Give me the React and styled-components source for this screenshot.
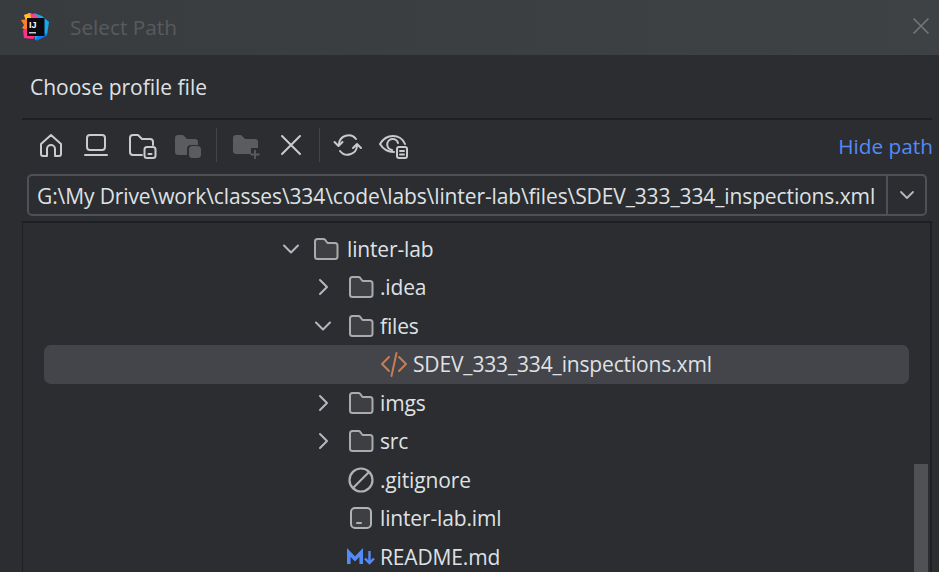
import React from 'react'
import styled, { createGlobalStyle } from 'styled-components'

const GlobalStyle = createGlobalStyle`
    html, body {
        margin: 0;
        padding: 0;
        background: #2b2d30;
    }
    * {
        box-sizing: border-box;
    }
`

const Dialog = styled.div`
    width: 939px;
    height: 572px;
    overflow: hidden;
    display: flex;
    flex-direction: column;
    background: #2b2d30;
    color: #dfe1e5;
    font-family: "Open Sans", "Noto Sans", sans-serif;
`

const TitleBar = styled.div`
    height: 55px;
    flex-shrink: 0;
    display: flex;
    align-items: center;
    padding: 0 9px 0 21px;
    background: linear-gradient(90deg, #393c3f, #3e4245);
`

const TitleText = styled.div`
    margin: 0 0 2px 19px;
    flex: 1;
    font-size: 20.8px;
    color: #585b5e;
`

const CloseButton = styled.div`
    width: 18px;
    height: 18px;
    margin-bottom: 3px;
    display: flex;
    color: #74777a;
`

const Content = styled.div`
    flex: 1;
    min-height: 0;
    display: flex;
    flex-direction: column;
    padding: 0 7px 0 22px;
`

const Heading = styled.div`
    height: 65px;
    flex-shrink: 0;
    padding: 0 8px;
    display: flex;
    align-items: center;
    font-size: 21px;
    border-bottom: 2px solid #1e1f22;
`

const Toolbar = styled.div`
    height: 54px;
    flex-shrink: 0;
    display: flex;
    align-items: center;
    padding-left: 15px;
`

const ToolIcon = styled.div`
    width: ${p => p.$w || 28}px;
    height: 28px;
    margin: 0 ${p => p.$gap ?? 17}px 5px 0;
    display: flex;
    color: ${p => (p.$off ? '#5a5c5f' : '#c9cbcf')};
`

const Separator = styled.div`
    width: 1px;
    height: 34px;
    margin: 0 ${p => p.$after}px 5px -2px;
    background: #43454a;
`

const HidePath = styled.div`
    margin: 0 -1px 2px auto;
    font-size: 20.8px;
    color: #548af7;
`

const PathCombo = styled.div`
    height: 42px;
    flex-shrink: 0;
    margin: 0 5px;
    display: flex;
    border: 2px solid #4e5157;
    border-radius: 5px;
`

const PathText = styled.div`
    flex: 1;
    padding: 1px 0 0 8px;
    display: flex;
    align-items: center;
    font-size: 21px;
    letter-spacing: -0.11px;
    white-space: nowrap;
    overflow: hidden;
`

const ComboArrow = styled.div`
    width: 39px;
    display: flex;
    align-items: center;
    justify-content: center;
    border-left: 2px solid #4e5157;
    color: #b4b8bf;
`

const Tree = styled.div`
    position: relative;
    flex: 1;
    min-height: 0;
    margin-top: 5px;
    padding: 6.5px 21px 0 21px;
    border-top: 2px solid #1e1f22;
    border-left: 1px solid #1e1f22;
    border-right: 2px solid #1e1f22;
    overflow: hidden;
`

const Row = styled.div`
    height: 38.5px;
    display: flex;
    align-items: center;
    padding-left: ${p => 235 + p.$level * 33}px;
    font-size: 21px;
    letter-spacing: -0.15px;
    border-radius: 7px;
    background: ${p => (p.$selected ? '#43454a' : 'transparent')};
`

const Chevron = styled.div`
    width: 24px;
    height: 24px;
    flex-shrink: 0;
    margin-left: ${p => (p.$level === 1 ? -1 : 0)}px;
    display: flex;
    color: #b4b8bf;
`

const iconLeft = { 0: 9, 1: 12, 2: 11 }
const iconRight = { 0: 7, 1: 5, 2: 5 }

const FileIcon = styled.div`
    width: 28px;
    height: 28px;
    flex-shrink: 0;
    margin: 0 ${p => iconRight[p.$level]}px 0 ${p => iconLeft[p.$level]}px;
    display: flex;
`

const ScrollThumb = styled.div`
    position: absolute;
    right: 2px;
    top: 241px;
    bottom: 0;
    width: 14px;
    background: #4f5155;
`

const Svg = ({ w = 28, h = 28, children }) => (
    <svg width={w} height={h} viewBox={`0 0 ${w} ${h}`} fill="none" stroke="currentColor" strokeWidth="2" strokeLinecap="round" strokeLinejoin="round">
        {children}
    </svg>
)

const Logo = () => (
    <svg width="30" height="30" viewBox="0 0 30 30">
        <path d="M13 0 L21 3 L28 9 L26 22 L14 27 L12 10 Z" fill="#1aa7ec" />
        <path d="M16 24 L26 20 L25 23 L15 28 Z" fill="#087cfa" />
        <path d="M3 2 L9 0 L16 2 L20 8 L6 10 Z" fill="#ff3d8b" />
        <path d="M3 2 L9 0 L10 5 L5 8 Z" fill="#ffc21f" />
        <path d="M0 7 L7 6 L8 19 L1 15 L3 12 Z" fill="#fe7d2d" />
        <path d="M2 17 L8 15 L14 23 L12 26 L3 25 Z" fill="#ff2f8e" />
        <rect x="6" y="5" width="17.5" height="18" fill="#0b0a0e" />
        <text x="8" y="14.5" fontSize="9" fontWeight="700" fill="#fff" fontFamily="Liberation Sans, sans-serif">IJ</text>
        <rect x="8" y="19" width="7" height="1.5" fill="#c9c9c9" />
    </svg>
)

const CloseIcon = () => (
    <svg width="18" height="18" viewBox="0 0 18 18" fill="none" stroke="currentColor" strokeWidth="1.6">
        <path d="M1.5 1.5 L16.5 16.5 M16.5 1.5 L1.5 16.5" />
    </svg>
)

const FolderPath = 'M3 6.5 a2.5 2.5 0 0 1 2.5 -2.5 h6 a2 2 0 0 1 1.5 .7 l2.5 3.3 h7.5 a2.5 2.5 0 0 1 2.5 2.5 v11 a2.5 2.5 0 0 1 -2.5 2.5 H5.5 a2.5 2.5 0 0 1 -2.5 -2.5 Z'

const HomeIcon = () => (
    <Svg>
        <path d="M4 13 L14 4 L24 13 V23 a2 2 0 0 1 -2 2 H18 V18 a4 4 0 0 0 -8 0 V25 H6 a2 2 0 0 1 -2 -2 Z" />
    </Svg>
)

const LaptopIcon = () => (
    <Svg>
        <rect x="5" y="4" width="18" height="15" rx="3" />
        <path d="M3 24 H25" />
    </Svg>
)

const ProjectIcon = () => (
    <svg width="30" height="28" viewBox="0 0 30 28" fill="none" stroke="currentColor" strokeWidth="2" strokeLinecap="round" strokeLinejoin="round">
        <path d="M14 24 H5 a3 3 0 0 1 -3 -3 V7 a3 3 0 0 1 3 -3 h5 l4 4 h8 a3 3 0 0 1 3 3 v3" />
        <rect x="16.5" y="16" width="11" height="11" rx="2.5" />
        <path d="M20.5 23 H23.5" />
    </svg>
)

const SolidFolderIcon = () => (
    <svg width="30" height="28" viewBox="0 0 30 28" fill="currentColor">
        <path d="M2 7 a3 3 0 0 1 3 -3 h5 l4 4 h8 a3 3 0 0 1 3 3 v3 h-7 a4 4 0 0 0 -4 4 v6 H5 a3 3 0 0 1 -3 -3 Z" />
        <rect x="16" y="15" width="12" height="12" rx="3.5" />
    </svg>
)

const NewFolderIcon = () => (
    <svg width="30" height="28" viewBox="0 0 30 28" fill="currentColor">
        <path d="M1 7 a3 3 0 0 1 3 -3 h5 l4 4 h10 a3 3 0 0 1 3 3 v6 h-7 v6 H4 a3 3 0 0 1 -3 -3 Z" />
        <path d="M23 19 V28 M18.5 23.5 H27.5" stroke="currentColor" strokeWidth="1.8" fill="none" />
    </svg>
)

const DeleteIcon = () => (
    <svg width="22" height="28" viewBox="0 0 22 28" fill="none" stroke="currentColor" strokeWidth="2" strokeLinecap="round">
        <path d="M2 5 L20 23 M20 5 L2 23" />
    </svg>
)

const RefreshIcon = () => (
    <svg width="30" height="28" viewBox="0 0 30 28" fill="none" stroke="currentColor" strokeWidth="2" strokeLinecap="round" strokeLinejoin="round">
        <path d="M6 13 a9.5 9.5 0 0 1 17 -5" />
        <path d="M24 15 a9.5 9.5 0 0 1 -17 5" />
        <path d="M1.5 11 L5.5 15 L9.5 11" />
        <path d="M20 17 L24 13 L28 17" />
    </svg>
)

const EyeIcon = () => (
    <svg width="30" height="28" viewBox="0 0 30 28" fill="none" stroke="currentColor" strokeWidth="2" strokeLinecap="round" strokeLinejoin="round">
        <path d="M15 21 C9 21 4 18 1 13 C4 8 9 5 14 5 C19 5 24 8 26 13" />
        <path d="M13 19 a5.5 5.5 0 1 1 6 -7" />
        <rect x="18" y="16" width="10" height="11" rx="2" />
        <path d="M21 20 H25 M21 23.5 H25" />
    </svg>
)

const SmallArrow = () => (
    <svg width="18" height="18" viewBox="0 0 18 18" fill="none" stroke="currentColor" strokeWidth="1.8" strokeLinecap="round" strokeLinejoin="round">
        <path d="M3 6 L9 12 L15 6" />
    </svg>
)

const ChevronIcon = ({ open }) => (
    <Svg w={24} h={24}>
        {open ? <path d="M5 8.5 L12 15.5 L19 8.5" /> : <path d="M9 5 L16 12 L9 19" />}
    </Svg>
)

const FolderIcon = () => (
    <svg width="28" height="28" viewBox="0 0 28 28" strokeLinejoin="round">
        <path d={FolderPath} fill="#3d3f43" stroke="#a9abaf" strokeWidth="2" />
    </svg>
)

const CodeIcon = () => (
    <svg width="28" height="28" viewBox="0 0 28 28" fill="none" stroke="#c77d55" strokeWidth="2" strokeLinecap="round" strokeLinejoin="round">
        <path d="M9 7 L2 14 L9 21" />
        <path d="M19 7 L26 14 L19 21" />
        <path d="M16.5 3 L11.5 26" />
    </svg>
)

const IgnoreIcon = () => (
    <svg width="28" height="28" viewBox="0 0 28 28" fill="none" stroke="#b0b2b6" strokeWidth="2.2" strokeLinecap="round">
        <circle cx="14" cy="14" r="11.5" />
        <path d="M6 22 L22 6" />
    </svg>
)

const ModuleIcon = () => (
    <svg width="28" height="28" viewBox="0 0 28 28" fill="none" stroke="#b0b2b6" strokeWidth="2" strokeLinecap="round">
        <rect x="4" y="4" width="20" height="20" rx="4" fill="#3d3f43" />
        <path d="M10 19 H14" />
    </svg>
)

const MarkdownIcon = () => (
    <svg width="28" height="28" viewBox="0 0 28 28" fill="none" stroke="#548af7" strokeLinejoin="miter" strokeLinecap="butt">
        <path d="M1.8 21 V9.5 L8 16 L14.2 9.5 V21" strokeWidth="3.6" />
        <path d="M22.5 8 V20 M18 15.5 L22.5 20 L27 15.5" strokeWidth="2.4" />
    </svg>
)

const rows = [
    { name: 'linter-lab', level: 0, type: 'folder', open: true },
    { name: '.idea', level: 1, type: 'folder' },
    { name: 'files', level: 1, type: 'folder', open: true },
    { name: 'SDEV_333_334_inspections.xml', level: 2, type: 'xml', selected: true },
    { name: 'imgs', level: 1, type: 'folder' },
    { name: 'src', level: 1, type: 'folder' },
    { name: '.gitignore', level: 1, type: 'ignore' },
    { name: 'linter-lab.iml', level: 1, type: 'iml' },
    { name: 'README.md', level: 1, type: 'md' },
]

const rowIcons = {
    folder: <FolderIcon />,
    xml: <CodeIcon />,
    ignore: <IgnoreIcon />,
    iml: <ModuleIcon />,
    md: <MarkdownIcon />,
}

const App = () => {
    return (
        <Dialog>
            <GlobalStyle />
            <TitleBar>
                <Logo />
                <TitleText>Select Path</TitleText>
                <CloseButton><CloseIcon /></CloseButton>
            </TitleBar>
            <Content>
                <Heading>Choose profile file</Heading>
                <Toolbar>
                    <ToolIcon $gap={17}><HomeIcon /></ToolIcon>
                    <ToolIcon $gap={18}><LaptopIcon /></ToolIcon>
                    <ToolIcon $w={30} $gap={15}><ProjectIcon /></ToolIcon>
                    <ToolIcon $w={30} $gap={15} $off><SolidFolderIcon /></ToolIcon>
                    <Separator $after={15} />
                    <ToolIcon $w={30} $gap={18} $off><NewFolderIcon /></ToolIcon>
                    <ToolIcon $w={22} $gap={19}><DeleteIcon /></ToolIcon>
                    <Separator $after={13} />
                    <ToolIcon $w={30} $gap={16}><RefreshIcon /></ToolIcon>
                    <ToolIcon $w={30} $gap={0}><EyeIcon /></ToolIcon>
                    <HidePath>Hide path</HidePath>
                </Toolbar>
                <PathCombo>
                    <PathText>G:\My Drive\work\classes\334\code\labs\linter-lab\files\SDEV_333_334_inspections.xml</PathText>
                    <ComboArrow><SmallArrow /></ComboArrow>
                </PathCombo>
                <Tree>
                    {rows.map(row => (
                        <Row key={row.name} $level={row.level} $selected={row.selected}>
                            <Chevron $level={row.level}>
                                {row.type === 'folder' && <ChevronIcon open={row.open} />}
                            </Chevron>
                            <FileIcon $level={row.level}>{rowIcons[row.type]}</FileIcon>
                            {row.name}
                        </Row>
                    ))}
                    <ScrollThumb />
                </Tree>
            </Content>
        </Dialog>
    )
}

export default App
